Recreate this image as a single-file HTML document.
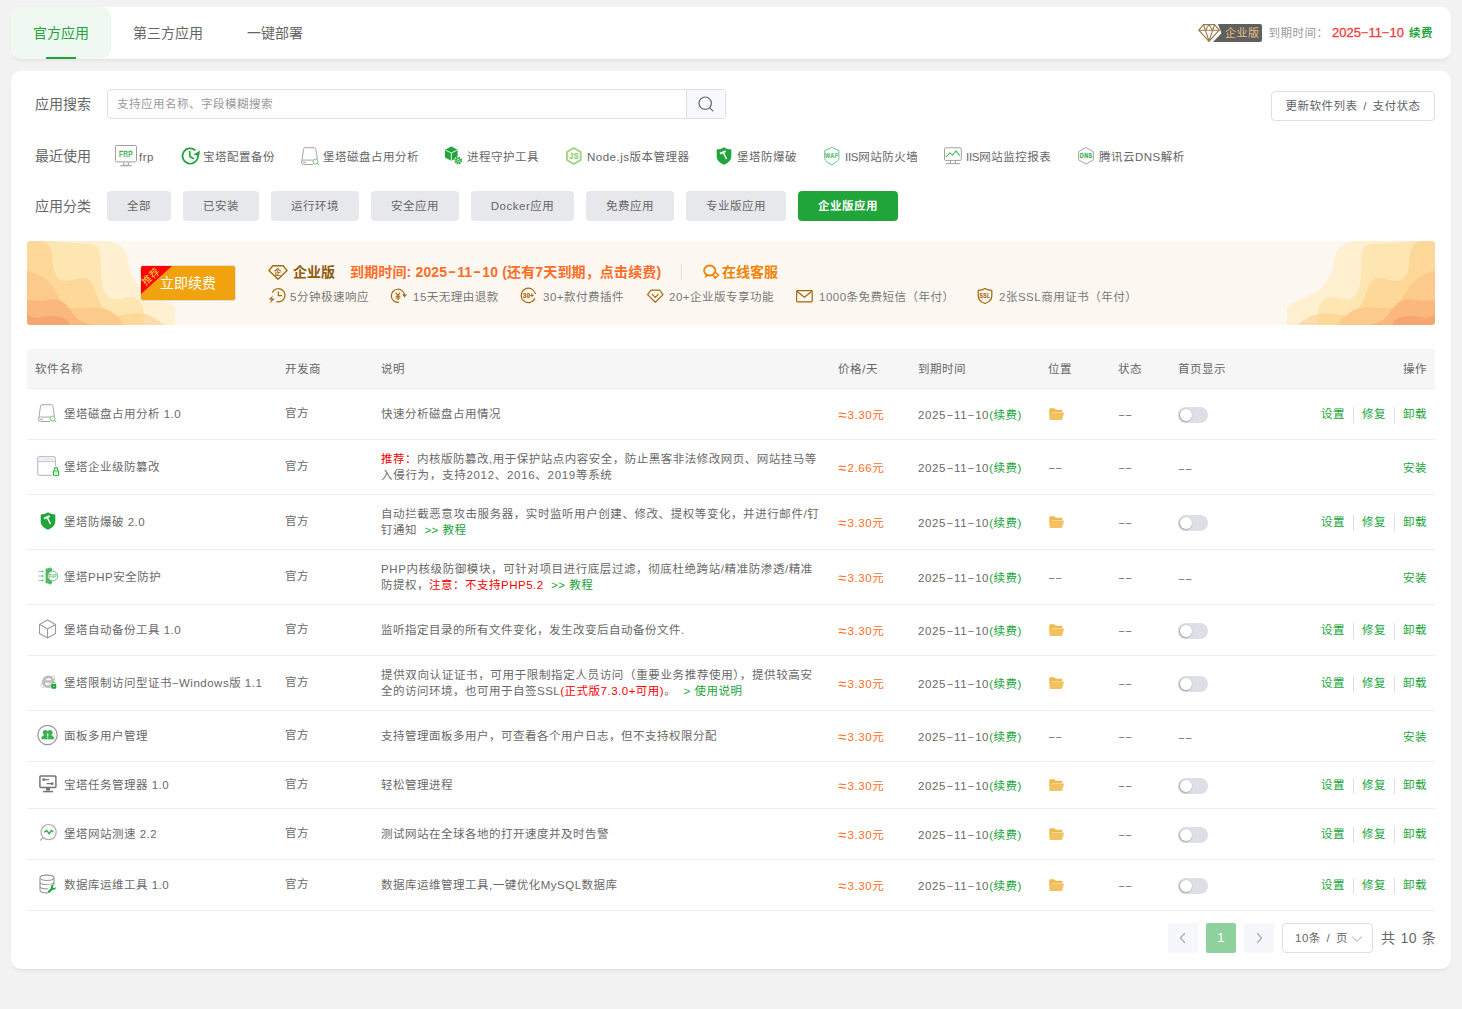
<!DOCTYPE html>
<html lang="zh-CN">
<head>
<meta charset="utf-8">
<title>软件商店</title>
<style>
*{box-sizing:border-box;margin:0;padding:0}
html,body{width:1462px;height:1009px;overflow:hidden;background:#f2f2f2}
body{font-family:"Liberation Sans","Noto Sans CJK SC",sans-serif;font-size:11.5px;letter-spacing:.5px;color:#696969;position:relative}
svg{display:block;overflow:visible}
.card{position:absolute;background:#fff;border-radius:10px;box-shadow:0 3px 4px -2px rgba(0,0,0,.085)}
#topcard{left:11px;top:7px;width:1440px;height:52px}
#maincard{left:11px;top:71px;width:1440px;height:898px}
.tab{letter-spacing:0;position:absolute;top:0;height:52px;line-height:52px;font-size:14px;color:#666;white-space:nowrap}
.tab.on{left:0;width:100px;background:#f0f9f1;border-radius:10px;color:#20a53a;text-align:center}
.tab.on:after{content:"";position:absolute;left:35px;bottom:0;width:30px;height:2px;background:#20a53a}
.lbl{letter-spacing:0;position:absolute;left:24px;font-size:14px;color:#666;line-height:20px;white-space:nowrap}
/* top right */
.vi{position:absolute}
.vbadge{position:absolute;left:1202px;top:17px;width:49px;height:18px;line-height:18px;background:#5f5f5f;color:#e6c083;font-size:11px;padding-left:12px;border-radius:0 2px 2px 0;white-space:nowrap;clip-path:polygon(5px 0,100% 0,100% 100%,0 100%,8.5px 52%)}
.vt{position:absolute;top:16px;height:20px;line-height:20px;white-space:nowrap}
.vdate{color:#ef3b3b;font-size:13px;letter-spacing:0;-webkit-text-stroke:.3px #ef3b3b}
/* search */
#search{position:absolute;left:96px;top:18px;width:619px;height:30px;border:1px solid #dcdfe6;border-radius:4px;background:#fff;overflow:hidden}
#search .ph{position:absolute;left:9px;top:0;line-height:28px;color:#999}
#search .btn{position:absolute;right:0;top:0;width:39px;height:28px;border-left:1px solid #dcdfe6;background:#f8f9fb}
#upd{word-spacing:2px;position:absolute;left:1260px;top:20px;width:164px;height:30px;border:1px solid #dcdfe6;border-radius:4px;line-height:28px;text-align:center;color:#606266;background:#fff;white-space:nowrap}
/* recent */
.rc{position:absolute;top:69px;height:32px;display:flex;align-items:center;white-space:nowrap;font-size:12px;color:#666}
.rc svg{margin-right:4px}
.ri{position:absolute}
.rt{position:absolute;top:76px;height:20px;line-height:20px;white-space:nowrap;color:#666}
/* categories */
.cat{position:absolute;top:120px;height:30px;line-height:30px;border-radius:4px;background:#e6e8eb;color:#666;text-align:center;white-space:nowrap}
.cat.on{background:#20a53a;color:#fff;font-weight:bold}
/* banner */
#banner{position:absolute;left:16px;top:170px;width:1408px;height:84px;background:#fdf7f1;border-radius:4px;overflow:hidden}
#banner .deco{position:absolute;top:0;width:148px;height:84px}
#renewbtn{letter-spacing:0;position:absolute;left:113px;top:24px;width:96px;height:36px;border:1px solid #e3dfd6;border-radius:3px;background:#f0a30f;overflow:hidden;color:#fff;font-size:14px;line-height:33px;white-space:nowrap}
#renewbtn .tri{position:absolute;left:0;top:0;width:0;height:0;border-top:28px solid #f00;border-right:31px solid transparent}
#renewbtn .rec{position:absolute;left:-4px;top:3.500px;width:28px;height:14px;line-height:14px;font-size:10px;color:#ffd54a;transform:rotate(-42deg);transform-origin:center;text-align:center}
#renewbtn .t{position:absolute;left:19px;top:1px}
.hy2{display:inline-block;width:10px;text-align:center;transform:translateY(-1px) scaleX(1.7)}
.b1{letter-spacing:0;position:absolute;top:21px;height:20px;line-height:20px;font-size:14px;font-weight:bold;white-space:nowrap}
.b2{position:absolute;top:46px;height:20px;line-height:20px;color:#777;white-space:nowrap}
.bi{position:absolute}
/* table */
#tbl{position:absolute;left:16px;top:278px;width:1408px}
.th{position:relative;height:40px;background:#f6f6f6;border-bottom:1px solid #ebeef5;color:#666}
.tr{position:relative;border-bottom:1px solid #ebeef5}
.c{position:absolute;top:0;bottom:0;display:flex;align-items:center;white-space:nowrap;line-height:16px}
.c.name{left:8px}
.c.name .ic{position:absolute;top:50%;transform:translateY(-50%)}
.c.name .nm{margin-left:29px}
.tr .c.dev{padding-bottom:2px}
.tr .c.price,.tr .c.exp,.tr .c.home{padding-top:2px}
.hy{display:inline-block;width:8px;text-align:center;letter-spacing:0;transform:translateY(-1px) scaleX(1.9);opacity:.85}
.dd .hy{width:7.3px;transform:scaleX(1.9);opacity:.9}
.ap{display:inline-block;width:9.5px;letter-spacing:0;transform:scale(1.3,1.3);transform-origin:0 60%}
.dt{letter-spacing:.6px}
.c.price{letter-spacing:.6px}
.tr .c.name .ic{top:calc(50% - 1px)}
.c.dev{left:258px}
.c.desc{left:354px;width:445px;white-space:normal;line-height:16px}
.c.price{left:811px;color:#fc6d26}
.c.exp{left:891px}
.c.pos{left:1021px}
.c.pos svg{margin-left:1px}
.c.st{left:1091px}
.c.home{left:1151px}
.c.op{right:8px;color:#20a53a}
.g{color:#20a53a}
.r{color:#f00}
.sep{display:inline-block;width:1px;height:16px;background:#dcdfe6;margin:0 8px;position:relative;top:1px}
.sw{width:30px;height:16px;border-radius:8px;background:#dcdfe6;position:relative}
.sw:after{content:"";position:absolute;left:2px;top:2px;width:12px;height:12px;border-radius:50%;background:#fff;box-shadow:-.5px .5px 1.5px .3px rgba(0,0,0,.3)}
/* pagination */
.pg{position:absolute;top:852px;height:30px;line-height:30px;text-align:center;border-radius:2px;background:#f5f7fa;color:#999;font-size:13px}
#psel{word-spacing:2px;position:absolute;left:1271px;top:852px;width:91px;height:30px;border:1px solid #dcdfe6;border-radius:4px;background:#fff;color:#666;line-height:28px;padding-left:12px;white-space:nowrap}
#ptot{position:absolute;left:1370px;top:852px;height:30px;line-height:30px;font-size:14px;color:#666;white-space:nowrap;letter-spacing:.5px;word-spacing:.5px}
</style>
</head>
<body>
<div class="card" id="topcard">
<div class="tab on">官方应用</div>
<div class="tab" style="left:122px">第三方应用</div>
<div class="tab" style="left:236px">一键部署</div>
<div class="vi" style="left:1187px;top:17px"><svg width="22" height="18" viewBox="0 0 22 18" style=""><path d="M5.400 0.700h11.200l4.600 5.500L11 17.300 0.800 6.200z" fill="none" stroke="#9a7b4f" stroke-width="1.200" stroke-linejoin="round"/><path d="M0.800 6.200h20.400M7.400 6.200L11 17 14.600 6.200M5.400 0.700l2 5.500 3.600-5.500 3.600 5.500 2-5.500" fill="none" stroke="#9a7b4f" stroke-width="1.100" stroke-linejoin="round"/></svg></div>
<div class="vbadge">企业版</div>
<div class="vt" style="left:1257.500px;color:#999">到期时间：</div>
<div class="vt vdate" style="left:1321px">2025<span class="hy" style="width:7.500px">-</span>11<span class="hy" style="width:7.500px">-</span>10</div>
<div class="vt" style="left:1398px;color:#20a53a;font-weight:bold">续费</div>
</div>
<div class="card" id="maincard">
<div class="lbl" style="top:23px">应用搜索</div>
<div id="search"><span class="ph">支持应用名称、字段模糊搜索</span><div class="btn">
<svg width="16" height="16" viewBox="0 0 16 16" style="position:absolute;left:11px;top:6px"><circle cx="7.200" cy="7.200" r="6.200" fill="none" stroke="#666" stroke-width="1.200"/><path d="M11.800 11.800l3 3" stroke="#666" stroke-width="1.200" stroke-linecap="round"/></svg>
</div></div>
<div id="upd">更新软件列表 / 支付状态</div>
<div class="lbl" style="top:75px">最近使用</div>
<div class="ri" style="left:104px;top:74px"><svg width="22" height="22" viewBox="0 0 22 22" style=""><rect x="0.5" y="0.5" width="21" height="16.4" rx="1.3" fill="#fff" stroke="#a0a0a0" stroke-width="1"/><path d="M9 17l-0.800 3.200h5.600L13 17M5 20.800h12" fill="none" stroke="#a0a0a0" stroke-width="1"/><text x="4" y="11.900" font-family="Liberation Sans, sans-serif" font-size="9.400" fill="#3bb153" stroke="#3bb153" stroke-width="0.400" textLength="14" lengthAdjust="spacingAndGlyphs">FRP</text></svg></div>
<div class="rt" style="left:128px">frp</div>
<div class="ri" style="left:170px;top:76px"><svg width="19" height="18" viewBox="0 0 19 18" style=""><path d="M16.900 8.300A7.700 7.700 0 1 1 14.400 3.300" fill="none" stroke="#20a53a" stroke-width="1.700"/><path d="M12.600 7.400L19 3.400l-0.900 5.900z" fill="#20a53a"/><path d="M8.800 4.600v4.900l3.500 2" fill="none" stroke="#20a53a" stroke-width="1.600" stroke-linecap="round" stroke-linejoin="round"/></svg></div>
<div class="rt" style="left:192px">宝塔配置备份</div>
<div class="ri" style="left:290px;top:76px"><svg width="19" height="18" viewBox="0 0 19 18" style=""><path d="M0.800 14.300L2.500 2.200a1.700 1.700 0 0 1 1.700-1.500h9a1.700 1.700 0 0 1 1.700 1.500l1.500 10" fill="none" stroke="#a6a6a6" stroke-width="1"/><path d="M12 13.100H2.500a1.900 1.900 0 0 0-1.900 1.900v0.600a1.900 1.900 0 0 0 1.900 1.900H12" fill="none" stroke="#a6a6a6" stroke-width="1"/><path d="M2.300 15.400h2.400" stroke="#a6a6a6" stroke-width="1" stroke-linecap="round"/><circle cx="14.500" cy="14.600" r="2.500" fill="#fff" stroke="#6cc47f" stroke-width="1"/><path d="M16.400 16.400l1.600 1.300" stroke="#6cc47f" stroke-width="1" stroke-linecap="round"/></svg></div>
<div class="rt" style="left:312px">堡塔磁盘占用分析</div>
<div class="ri" style="left:434px;top:75px"><svg width="18" height="19" viewBox="0 0 18 19" style=""><path d="M6.300 0.600l6.300 3.200v7.600l-6.300 3.400L0 11.400V3.800z" fill="#20a53a"/><path d="M0.300 4l6 3 6-3M6.300 7v7.600" fill="none" stroke="#fff" stroke-width="0.900"/><circle cx="13.200" cy="14.600" r="4.200" fill="#fff"/><circle cx="13.200" cy="14.600" r="2.600" fill="#20a53a"/><circle cx="13.200" cy="14.600" r="3.200" fill="none" stroke="#20a53a" stroke-width="1.500" stroke-dasharray="1.400 1.113"/><circle cx="13.200" cy="14.600" r="1.300" fill="none" stroke="#fff" stroke-width="0.700"/></svg></div>
<div class="rt" style="left:456px">进程守护工具</div>
<div class="ri" style="left:554px;top:75px"><svg width="17" height="19" viewBox="0 0 17 19" style=""><path d="M8.800 2l6.900 4v8l-6.900 4-6.900-4V6z" fill="#fff" stroke="#9dd47c" stroke-width="1.900" stroke-linejoin="round"/><text x="4.300" y="13.200" font-family="Liberation Sans, sans-serif" font-size="8.600" font-weight="bold" fill="#94cf72" stroke="#94cf72" stroke-width="0.300" textLength="9.800" lengthAdjust="spacingAndGlyphs">JS</text></svg></div>
<div class="rt" style="left:576px">Node.js版本管理器</div>
<div class="ri" style="left:705px;top:76px"><svg width="16" height="18" viewBox="0 0 16 18" style=""><path d="M8 0.300c2.200 1.500 4.600 2.200 7.300 2.300v6.300c0 4.200-3 7-7.300 8.800C3.700 15.900 0.700 13.100 0.700 8.900V2.600C3.400 2.500 5.800 1.800 8 0.300z" fill="#20a53a"/><path d="M4 6.700l5.600-2.600" fill="none" stroke="#fff" stroke-width="1.900"/><path d="M7.300 5.600l3 6" fill="none" stroke="#fff" stroke-width="1.400" stroke-linecap="round"/></svg></div>
<div class="rt" style="left:726px">堡塔防爆破</div>
<div class="ri" style="left:812px;top:75px"><svg width="17" height="19" viewBox="0 0 17 19" style=""><path d="M8.800 1.300l7.100 3.400v7.800c-0.600 2.400-3.300 4.600-7.100 6.200-3.800-1.600-6.500-3.800-7.100-6.200V4.700z" fill="#fff" stroke="#6cc47f" stroke-width="1" stroke-linejoin="round"/><text x="2" y="12" font-family="Liberation Sans, sans-serif" font-size="6.400" font-weight="bold" fill="#5cbd72" stroke="#5cbd72" stroke-width="0.200" textLength="13.400" lengthAdjust="spacingAndGlyphs">WAF</text></svg></div>
<div class="rt" style="left:834px"><span style="letter-spacing:-.3px">IIS</span>网站防火墙</div>
<div class="ri" style="left:933px;top:76px"><svg width="19" height="18" viewBox="0 0 19 18" style=""><rect x="0.500" y="0.800" width="16.800" height="12.600" rx="1" fill="#fff" stroke="#a0a0a0" stroke-width="1"/><path d="M6.500 13.600v2.600M11.300 13.600v2.600M2 16.600h14" fill="none" stroke="#a0a0a0" stroke-width="1"/><path d="M2.400 9.600l3.500-3.800 2.600 2.400 3.400-4.300 3.500 4.500" fill="none" stroke="#4cbb64" stroke-width="1.100" stroke-linejoin="round" stroke-linecap="round"/></svg></div>
<div class="rt" style="left:955px"><span style="letter-spacing:-.3px">IIS</span>网站监控报表</div>
<div class="ri" style="left:1066px;top:75px"><svg width="18" height="19" viewBox="0 0 18 19" style=""><path d="M9 1.500l7.400 4.200v8.200L9 18.100l-7.400-4.200V5.700z" fill="#fff" stroke="#a6a6a6" stroke-width="1" stroke-linejoin="round"/><text x="2.800" y="12.200" font-family="Liberation Sans, sans-serif" font-size="6.400" font-weight="bold" fill="#35ad4e" stroke="#35ad4e" stroke-width="0.200" textLength="12.800" lengthAdjust="spacingAndGlyphs">DNS</text></svg></div>
<div class="rt" style="left:1088px">腾讯云DNS解析</div>
<div class="lbl" style="top:125px">应用分类</div>
<div class="cat" style="left:96px;width:64px">全部</div>
<div class="cat" style="left:172px;width:76px">已安装</div>
<div class="cat" style="left:260px;width:88px">运行环境</div>
<div class="cat" style="left:360px;width:88px">安全应用</div>
<div class="cat" style="left:460px;width:103px">Docker应用</div>
<div class="cat" style="left:575px;width:88px">免费应用</div>
<div class="cat" style="left:675px;width:100px">专业版应用</div>
<div class="cat on" style="left:787px;width:100px">企业版应用</div>
<div id="banner">
<svg class="deco" style="left:0;transform:scaleX(-1)" width="148" height="84" viewBox="0 0 148 84"><path d="M0 84V66C8 60 16 57 23 54.500C31 51.500 38 45 43 35C47 27 46 19 49 12.300C52 5 60 0 69.400 0H148V84z" fill="#fef0d0"/><path d="M31 84V74C31 64 36 56.500 43.400 56C49 55.600 54 58.600 59.800 58.400C66 58.200 70.500 54 72.500 45C74.500 36 73.800 28 74.200 21C74.600 12 75 4.500 84 3C92 2 104 2.800 112 1.600C118 0.700 122 0 125.500 0H148V84z" fill="#fee6b2"/><path d="M10.600 84C18 78 26 73 36 72.300C44 71.800 52 74.500 58.400 74.500L50.900 84z" fill="#fddcab"/><path d="M31 84V73C34 72.400 38 72 42 72.600C48 73.600 53 74.600 58.400 74.500C66 72 72 68 75 62C79 54 80.500 47 83 42.300C85.500 37.500 90 36.200 95 37.300C101 38.600 106 40.400 111.800 39.600C117 38.600 121 33 122 24C122.800 16 122.500 10 125.500 5.400C128 1.800 132 0 136.400 0H148V84z" fill="#fdd899"/><path d="M50.900 84C53 79.500 56 76.500 59.500 74C63 71 67 68.600 70.800 67.700C76 66.300 82 66 88 66.400C94 66.800 100 67.600 106.300 67C110 66.300 112.500 64.500 114 61C116 56 120 48 125.500 42.300C132 35.500 140 31.500 148 29.600V84z" fill="#fccb8b"/><path d="M79 84C85 83.500 91 82 95.400 79.300C100 76.500 103 71 106.300 67C109 63.500 112 60.500 116 59C120 57.600 125 58.200 130 59.200C136 60.300 142 59.500 148 59V84z" fill="#fab87d"/><path d="M105 84C106 80.500 108.500 78 112 76.600C116 75 121 74.700 126 75C131 75.300 135 77.200 139 76.800C143 76.400 146.500 74.500 148 72.400V84z" fill="#f8a671"/></svg>
<svg class="deco" style="right:0" width="148" height="84" viewBox="0 0 148 84"><path d="M0 84V66C8 60 16 57 23 54.500C31 51.500 38 45 43 35C47 27 46 19 49 12.300C52 5 60 0 69.400 0H148V84z" fill="#fef0d0"/><path d="M31 84V74C31 64 36 56.500 43.400 56C49 55.600 54 58.600 59.800 58.400C66 58.200 70.500 54 72.500 45C74.500 36 73.800 28 74.200 21C74.600 12 75 4.500 84 3C92 2 104 2.800 112 1.600C118 0.700 122 0 125.500 0H148V84z" fill="#fee6b2"/><path d="M10.600 84C18 78 26 73 36 72.300C44 71.800 52 74.500 58.400 74.500L50.900 84z" fill="#fddcab"/><path d="M31 84V73C34 72.400 38 72 42 72.600C48 73.600 53 74.600 58.400 74.500C66 72 72 68 75 62C79 54 80.500 47 83 42.300C85.500 37.500 90 36.200 95 37.300C101 38.600 106 40.400 111.800 39.600C117 38.600 121 33 122 24C122.800 16 122.500 10 125.500 5.400C128 1.800 132 0 136.400 0H148V84z" fill="#fdd899"/><path d="M50.900 84C53 79.500 56 76.500 59.500 74C63 71 67 68.600 70.800 67.700C76 66.300 82 66 88 66.400C94 66.800 100 67.600 106.300 67C110 66.300 112.500 64.500 114 61C116 56 120 48 125.500 42.300C132 35.500 140 31.500 148 29.600V84z" fill="#fccb8b"/><path d="M79 84C85 83.500 91 82 95.400 79.300C100 76.500 103 71 106.300 67C109 63.500 112 60.500 116 59C120 57.600 125 58.200 130 59.200C136 60.300 142 59.500 148 59V84z" fill="#fab87d"/><path d="M105 84C106 80.500 108.500 78 112 76.600C116 75 121 74.700 126 75C131 75.300 135 77.200 139 76.800C143 76.400 146.500 74.500 148 72.400V84z" fill="#f8a671"/></svg>
<div id="renewbtn"><div class="tri"></div><div class="rec">推荐</div><span class="t">立即续费</span></div>
<div class="bi" style="left:241px;top:24px"><svg width="20" height="15" viewBox="0 0 20 15" style=""><path d="M4.800 0.800h10.400l3.900 4.800L10 14.200 0.900 5.600z" fill="none" stroke="#a4690a" stroke-width="1.400" stroke-linejoin="round"/><text x="10" y="9.600" font-family="Liberation Sans, Noto Sans CJK SC, sans-serif" font-size="7.500" font-weight="bold" fill="#a4690a" text-anchor="middle">企</text></svg></div>
<div class="b1" style="left:266px;color:#8d5b0b">企业版</div>
<div class="b1" style="left:323px;color:#fc6d26;letter-spacing:.15px">到期时间: 2025<span class="hy2">-</span>11<span class="hy2">-</span>10 (还有7天到期，点击续费)</div>
<div class="bi" style="left:654px;top:23px;width:1px;height:16px;background:#dcdfe6"></div>
<div class="bi" style="left:676px;top:23px"><svg width="17" height="16" viewBox="0 0 17 16" style=""><path d="M2.200 10.200l0.200 3.800 3.300-2.400z" fill="#f08408"/><ellipse cx="6.700" cy="6.500" rx="5.600" ry="5" fill="#fdf7f1" stroke="#f08408" stroke-width="1.800"/><path d="M10.900 12.600l1 3 2-2.400z" fill="#f08408"/><path d="M12.400 8.400l3.300 2.600-3.300 2.600-2.800-2.600z" fill="#fdf7f1" stroke="#f08408" stroke-width="1.500" stroke-linejoin="round"/></svg></div>
<div class="b1" style="left:695px;color:#f08408">在线客服</div>
<div class="bi" style="left:241px;top:46px"><svg width="17" height="17" viewBox="0 0 17 17" style=""><path d="M4.500 5.200a6.600 6.600 0 1 1 4.300 9.400" fill="none" stroke="#a4690a" stroke-width="1.200" stroke-linecap="round"/><path d="M10.300 4.800v3.800h3.200" fill="none" stroke="#a4690a" stroke-width="1.200" stroke-linecap="round"/><path d="M5.200 8.200L0.600 12.600h3l-1.800 4 5-5H3.600z" fill="#a4690a"/></svg></div>
<div class="b2" style="left:263px">5分钟极速响应</div>
<div class="bi" style="left:363px;top:46px"><svg width="17" height="17" viewBox="0 0 17 17" style=""><path d="M8.400 15.400A6.600 6.600 0 1 1 14.500 8.400" fill="none" stroke="#a4690a" stroke-width="1.200" stroke-linecap="round"/><path d="M12.200 7.600h4.800l-2.400 3z" fill="#a4690a"/><path d="M5.800 5.600l2.200 3 2.200-3M5.600 9.200h4.800M5.600 11h4.800M8 8.600v4.600" fill="none" stroke="#a4690a" stroke-width="1.100"/></svg></div>
<div class="b2" style="left:386px">15天无理由退款</div>
<div class="bi" style="left:493px;top:46px"><svg width="17" height="17" viewBox="0 0 17 17" style=""><path d="M14.800 11.800a7.200 7.200 0 1 1 0.600-5.200" fill="none" stroke="#a4690a" stroke-width="1.200" stroke-linecap="round"/><text x="3" y="11.400" font-family="Liberation Sans, sans-serif" font-size="6.800" font-weight="bold" fill="#a4690a" stroke="#a4690a" stroke-width="0.250" textLength="11.200" lengthAdjust="spacingAndGlyphs">30+</text></svg></div>
<div class="b2" style="left:516px">30+款付费插件</div>
<div class="bi" style="left:620px;top:46px"><svg width="17" height="17" viewBox="0 0 17 17" style=""><path d="M4 3.200h8.600l3.400 4.400L8.300 15.200 0.600 7.600z" fill="none" stroke="#a4690a" stroke-width="1.200" stroke-linejoin="round"/><path d="M5.300 7.400l3 3 3-3" fill="none" stroke="#a4690a" stroke-width="1.200" stroke-linecap="round" stroke-linejoin="round"/></svg></div>
<div class="b2" style="left:642px">20+企业版专享功能</div>
<div class="bi" style="left:769px;top:46px"><svg width="17" height="17" viewBox="0 0 17 17" style=""><rect x="0.600" y="3.600" width="15.600" height="11.200" rx="0.800" fill="none" stroke="#a4690a" stroke-width="1.200"/><path d="M1 4.200l7.400 6 7.400-6" fill="none" stroke="#a4690a" stroke-width="1.200" stroke-linejoin="round"/></svg></div>
<div class="b2" style="left:792px">1000条免费短信（年付）</div>
<div class="bi" style="left:950px;top:46px"><svg width="17" height="17" viewBox="0 0 17 17" style=""><path d="M8 1.500c2 1.200 4.200 1.800 6.800 1.900v5.500c0 3.600-2.700 6-6.800 7.600-4.100-1.600-6.800-4-6.800-7.600V3.400c2.600-0.100 4.800-0.700 6.800-1.900z" fill="none" stroke="#a4690a" stroke-width="1.200" stroke-linejoin="round"/><text x="2.600" y="11.300" font-family="Liberation Sans, sans-serif" font-size="6.600" font-weight="bold" fill="#a4690a" stroke="#a4690a" stroke-width="0.200" textLength="10.800" lengthAdjust="spacingAndGlyphs">SSL</text></svg></div>
<div class="b2" style="left:972px">2张SSL商用证书（年付）</div>
</div>
<div id="tbl">
<div class="th"><div class="c name"><div>软件名称</div></div><div class="c dev"><div>开发商</div></div><div class="c desc"><div>说明</div></div><div class="c price" style="color:inherit"><div>价格/天</div></div><div class="c exp"><div>到期时间</div></div><div class="c pos"><div>位置</div></div><div class="c st"><div>状态</div></div><div class="c home"><div>首页显示</div></div><div class="c op" style="color:inherit"><div>操作</div></div></div>
<div class="tr" style="height:51px">
<div class="c name"><span class="ic" style="left:3px"><svg width="19" height="18" viewBox="0 0 19 18" style=""><path d="M0.800 14.300L2.500 2.200a1.700 1.700 0 0 1 1.700-1.500h9a1.700 1.700 0 0 1 1.700 1.500l1.500 10" fill="none" stroke="#a6a6a6" stroke-width="1"/><path d="M12 13.100H2.500a1.900 1.900 0 0 0-1.900 1.900v0.600a1.900 1.900 0 0 0 1.900 1.900H12" fill="none" stroke="#a6a6a6" stroke-width="1"/><path d="M2.300 15.400h2.400" stroke="#a6a6a6" stroke-width="1" stroke-linecap="round"/><circle cx="14.500" cy="14.600" r="2.500" fill="#fff" stroke="#6cc47f" stroke-width="1"/><path d="M16.400 16.400l1.600 1.300" stroke="#6cc47f" stroke-width="1" stroke-linecap="round"/></svg></span><span class="nm">堡塔磁盘占用分析 1.0</span></div>
<div class="c dev"><div>官方</div></div>
<div class="c desc"><div>快速分析磁盘占用情况</div></div>
<div class="c price"><div><span class="ap">≈</span>3.30元</div></div>
<div class="c exp"><div><span class="dt">2025<span class="hy">-</span>11<span class="hy">-</span>10</span><span class="g">(续费)</span></div></div>
<div class="c pos"><svg width="15" height="12" viewBox="0 0 15 12" style=""><path d="M0.300 1.300a1 1 0 0 1 1-1h4l1.400 1.500h5.600a1 1 0 0 1 1 1v1.400H3.300L0.300 10.500z" fill="#f0b94d"/><path d="M3.400 4.600h10.800a0.700 0.700 0 0 1 0.700 0.900l-1.800 5.700a1 1 0 0 1-1 0.700H1.200a0.700 0.700 0 0 1-0.700-0.900l1.900-5.700a1 1 0 0 1 1-0.700z" fill="#f3c260"/></svg></div>
<div class="c st"><span class="dd"><span class="hy">-</span><span class="hy">-</span></span></div>
<div class="c home"><div class="sw"></div></div>
<div class="c op"><span>设置</span><i class="sep"></i><span>修复</span><i class="sep"></i><span>卸载</span></div>
</div>
<div class="tr" style="height:55px">
<div class="c name"><span class="ic" style="left:2px"><svg width="22" height="20" viewBox="0 0 22 20" style=""><rect x="0.700" y="0.700" width="17.700" height="18.700" rx="2" fill="#fff" stroke="#c0c0cf" stroke-width="1.200"/><path d="M0.800 5.400h17.500" stroke="#c0c0cf" stroke-width="1.100"/><path d="M2 3.100h14.600" stroke="#d9d9e3" stroke-width="1.300" stroke-dasharray="0.900 0.500 0.900 0.500 0.900 0.500 0.900 0.700 9 0"/><rect x="14.600" y="10.300" width="8" height="10.500" fill="#fff"/><path d="M17.300 14.800v-1.400a1.700 1.700 0 0 1 3.400 0v1.400" fill="none" stroke="#2cba3d" stroke-width="1.200"/><rect x="16.400" y="15" width="5.200" height="4.500" rx="0.500" fill="#fff" stroke="#2cba3d" stroke-width="1.200"/><rect x="18.600" y="16.300" width="0.800" height="1.900" fill="#2cba3d"/></svg></span><span class="nm">堡塔企业级防篡改</span></div>
<div class="c dev"><div>官方</div></div>
<div class="c desc"><div><span class="r">推荐：</span>内核版防篡改,用于保护站点内容安全，防止黑客非法修改网页、网站挂马等<br><span style="letter-spacing:.7px">入侵行为，支持2012、2016、2019等系统</span></div></div>
<div class="c price"><div><span class="ap">≈</span>2.66元</div></div>
<div class="c exp"><div><span class="dt">2025<span class="hy">-</span>11<span class="hy">-</span>10</span><span class="g">(续费)</span></div></div>
<div class="c pos"><span class="dd"><span class="hy">-</span><span class="hy">-</span></span></div>
<div class="c st"><span class="dd"><span class="hy">-</span><span class="hy">-</span></span></div>
<div class="c home"><span class="dd"><span class="hy">-</span><span class="hy">-</span></span></div>
<div class="c op" style="padding-top:2px"><span>安装</span></div>
</div>
<div class="tr" style="height:55px">
<div class="c name"><span class="ic" style="left:5px"><svg width="16" height="18" viewBox="0 0 16 18" style=""><path d="M8 0.300c2.200 1.500 4.600 2.200 7.300 2.300v6.300c0 4.200-3 7-7.300 8.800C3.700 15.900 0.700 13.100 0.700 8.900V2.600C3.400 2.500 5.800 1.800 8 0.300z" fill="#20a53a"/><path d="M4 6.700l5.600-2.600" fill="none" stroke="#fff" stroke-width="1.900"/><path d="M7.300 5.600l3 6" fill="none" stroke="#fff" stroke-width="1.400" stroke-linecap="round"/></svg></span><span class="nm">堡塔防爆破 2.0</span></div>
<div class="c dev"><div>官方</div></div>
<div class="c desc"><div><span style="letter-spacing:.57px">自动拦截恶意攻击服务器，实时监听用户创建、修改、提权等变化，并进行邮件/钉</span><br>钉通知 <span class="g">&nbsp;&gt;&gt; 教程</span></div></div>
<div class="c price"><div><span class="ap">≈</span>3.30元</div></div>
<div class="c exp"><div><span class="dt">2025<span class="hy">-</span>11<span class="hy">-</span>10</span><span class="g">(续费)</span></div></div>
<div class="c pos"><svg width="15" height="12" viewBox="0 0 15 12" style=""><path d="M0.300 1.300a1 1 0 0 1 1-1h4l1.400 1.500h5.600a1 1 0 0 1 1 1v1.400H3.300L0.300 10.500z" fill="#f0b94d"/><path d="M3.400 4.600h10.800a0.700 0.700 0 0 1 0.700 0.900l-1.800 5.700a1 1 0 0 1-1 0.700H1.200a0.700 0.700 0 0 1-0.700-0.900l1.900-5.700a1 1 0 0 1 1-0.700z" fill="#f3c260"/></svg></div>
<div class="c st"><span class="dd"><span class="hy">-</span><span class="hy">-</span></span></div>
<div class="c home"><div class="sw"></div></div>
<div class="c op"><span>设置</span><i class="sep"></i><span>修复</span><i class="sep"></i><span>卸载</span></div>
</div>
<div class="tr" style="height:55px">
<div class="c name"><span class="ic" style="left:3px"><svg width="20" height="18" viewBox="0 0 20 18" style=""><path d="M0.500 4.500h4M0.500 9h4M0.500 13.500h4" stroke="#8ed39b" stroke-width="1" fill="none"/><path d="M3.800 3l2.200 1.500-2.200 1.500zM3.800 7.500l2.200 1.500-2.200 1.500zM3.800 12l2.200 1.500-2.200 1.500z" fill="#6cc47f"/><path d="M7.600 1.600c2.200 0 3.800-0.700 5-1.400l1.500 2v13.600l-1.500 2c-1.200-0.800-2.800-1.600-5-1.800z" fill="#4cba63"/><circle cx="14.800" cy="9" r="4.900" fill="#fff" stroke="#6cc47f" stroke-width="1"/><text x="10.900" y="10.700" font-family="Liberation Sans, sans-serif" font-size="4.800" font-weight="bold" fill="#4cba63" textLength="7.800" lengthAdjust="spacingAndGlyphs">PHP</text></svg></span><span class="nm">堡塔PHP安全防护</span></div>
<div class="c dev"><div>官方</div></div>
<div class="c desc"><div><span style="letter-spacing:.59px">PHP内核级防御模块，可针对项目进行底层过滤，彻底杜绝跨站/精准防渗透/精准</span><br>防提权，<span class="r">注意：不支持PHP5.2</span> <span class="g">&nbsp;&gt;&gt; 教程</span></div></div>
<div class="c price"><div><span class="ap">≈</span>3.30元</div></div>
<div class="c exp"><div><span class="dt">2025<span class="hy">-</span>11<span class="hy">-</span>10</span><span class="g">(续费)</span></div></div>
<div class="c pos"><span class="dd"><span class="hy">-</span><span class="hy">-</span></span></div>
<div class="c st"><span class="dd"><span class="hy">-</span><span class="hy">-</span></span></div>
<div class="c home"><span class="dd"><span class="hy">-</span><span class="hy">-</span></span></div>
<div class="c op" style="padding-top:2px"><span>安装</span></div>
</div>
<div class="tr" style="height:51px">
<div class="c name"><span class="ic" style="left:3px"><svg width="19" height="20" viewBox="0 0 19 20" style=""><path d="M9.500 1l8 4.400v9.200l-8 4.400-8-4.400V5.400z" fill="#fff" stroke="#9a9a9a" stroke-width="1.100" stroke-linejoin="round"/><path d="M1.700 5.600l7.800 4.300 7.800-4.300M9.500 9.900v8.900" fill="none" stroke="#9a9a9a" stroke-width="1.100" stroke-linejoin="round"/></svg></span><span class="nm">堡塔自动备份工具 1.0</span></div>
<div class="c dev"><div>官方</div></div>
<div class="c desc"><div>监听指定目录的所有文件变化，发生改变后自动备份文件.</div></div>
<div class="c price"><div><span class="ap">≈</span>3.30元</div></div>
<div class="c exp"><div><span class="dt">2025<span class="hy">-</span>11<span class="hy">-</span>10</span><span class="g">(续费)</span></div></div>
<div class="c pos"><svg width="15" height="12" viewBox="0 0 15 12" style=""><path d="M0.300 1.300a1 1 0 0 1 1-1h4l1.400 1.500h5.600a1 1 0 0 1 1 1v1.400H3.300L0.300 10.500z" fill="#f0b94d"/><path d="M3.400 4.600h10.800a0.700 0.700 0 0 1 0.700 0.900l-1.800 5.700a1 1 0 0 1-1 0.700H1.200a0.700 0.700 0 0 1-0.700-0.900l1.900-5.700a1 1 0 0 1 1-0.700z" fill="#f3c260"/></svg></div>
<div class="c st"><span class="dd"><span class="hy">-</span><span class="hy">-</span></span></div>
<div class="c home"><div class="sw"></div></div>
<div class="c op"><span>设置</span><i class="sep"></i><span>修复</span><i class="sep"></i><span>卸载</span></div>
</div>
<div class="tr" style="height:55px">
<div class="c name"><span class="ic" style="left:4px"><svg width="19" height="18" viewBox="0 0 19 18" style=""><ellipse cx="8.800" cy="8.700" rx="8.300" ry="3.300" transform="rotate(-36 8.800 8.700)" fill="none" stroke="#d4d4d4" stroke-width="1"/><path d="M13.700 10.900a5 5 0 1 1 0.500-2.300H5.500" fill="none" stroke="#bdbdbd" stroke-width="2.500"/><path d="M13.500 11.200v-0.700a1.300 1.300 0 0 1 2.600 0v0.700" fill="none" stroke="#5cc470" stroke-width="1"/><rect x="12.300" y="10.900" width="5" height="4.800" rx="1" fill="#20a53a"/><rect x="14" y="12.900" width="1.600" height="0.800" fill="#bfe6c6"/></svg></span><span class="nm">堡塔限制访问型证书<span class="hy" style="width:7px">-</span>Windows版 1.1</span></div>
<div class="c dev"><div>官方</div></div>
<div class="c desc"><div><span style="letter-spacing:.65px">提供双向认证证书，可用于限制指定人员访问（重要业务推荐使用），提供较高安</span><br>全的访问环境，也可用于自签SSL<span class="r">(正式版7.3.0+可用)</span>。 <span class="g">&nbsp;&gt; 使用说明</span></div></div>
<div class="c price"><div><span class="ap">≈</span>3.30元</div></div>
<div class="c exp"><div><span class="dt">2025<span class="hy">-</span>11<span class="hy">-</span>10</span><span class="g">(续费)</span></div></div>
<div class="c pos"><svg width="15" height="12" viewBox="0 0 15 12" style=""><path d="M0.300 1.300a1 1 0 0 1 1-1h4l1.400 1.500h5.600a1 1 0 0 1 1 1v1.400H3.300L0.300 10.500z" fill="#f0b94d"/><path d="M3.400 4.600h10.800a0.700 0.700 0 0 1 0.700 0.900l-1.800 5.700a1 1 0 0 1-1 0.700H1.200a0.700 0.700 0 0 1-0.700-0.900l1.900-5.700a1 1 0 0 1 1-0.700z" fill="#f3c260"/></svg></div>
<div class="c st"><span class="dd"><span class="hy">-</span><span class="hy">-</span></span></div>
<div class="c home"><div class="sw"></div></div>
<div class="c op"><span>设置</span><i class="sep"></i><span>修复</span><i class="sep"></i><span>卸载</span></div>
</div>
<div class="tr" style="height:51px">
<div class="c name"><span class="ic" style="left:2px"><svg width="21" height="21" viewBox="0 0 21 21" style=""><circle cx="10.500" cy="10.500" r="9.700" fill="#fff" stroke="#999" stroke-width="1.200"/><circle cx="8.400" cy="8" r="2.600" fill="#3bb153"/><circle cx="13" cy="8" r="2.600" fill="#3bb153"/><path d="M4.200 14.800c0-2.700 1.800-4.200 4.200-4.200s4.200 1.500 4.200 4.200z" fill="#3bb153"/><path d="M8.800 14.800c0-2.700 1.800-4.200 4.200-4.200s4.200 1.500 4.200 4.200z" fill="#3bb153"/><path d="M10.700 8.500v6.300" stroke="#fff" stroke-width="0.600"/></svg></span><span class="nm">面板多用户管理</span></div>
<div class="c dev"><div>官方</div></div>
<div class="c desc"><div>支持管理面板多用户，可查看各个用户日志，但不支持权限分配</div></div>
<div class="c price"><div><span class="ap">≈</span>3.30元</div></div>
<div class="c exp"><div><span class="dt">2025<span class="hy">-</span>11<span class="hy">-</span>10</span><span class="g">(续费)</span></div></div>
<div class="c pos"><span class="dd"><span class="hy">-</span><span class="hy">-</span></span></div>
<div class="c st"><span class="dd"><span class="hy">-</span><span class="hy">-</span></span></div>
<div class="c home"><span class="dd"><span class="hy">-</span><span class="hy">-</span></span></div>
<div class="c op" style="padding-top:2px"><span>安装</span></div>
</div>
<div class="tr" style="height:47px">
<div class="c name"><span class="ic" style="left:3px"><svg width="19" height="18" viewBox="0 0 19 18" style=""><rect x="1.900" y="1" width="16" height="11.600" rx="1" fill="#fff" stroke="#757575" stroke-width="1.500"/><path d="M5 4.600h6M8.500 8.600h6.500" stroke="#757575" stroke-width="1.300"/><rect x="4.400" y="3.400" width="2.400" height="2.400" fill="#757575"/><rect x="13" y="7.400" width="2.400" height="2.400" fill="#757575"/><path d="M8 13v2.600h4V13" fill="#757575"/><path d="M5 16.600h10" stroke="#757575" stroke-width="1.500"/></svg></span><span class="nm">宝塔任务管理器 1.0</span></div>
<div class="c dev"><div>官方</div></div>
<div class="c desc"><div>轻松管理进程</div></div>
<div class="c price"><div><span class="ap">≈</span>3.30元</div></div>
<div class="c exp"><div><span class="dt">2025<span class="hy">-</span>11<span class="hy">-</span>10</span><span class="g">(续费)</span></div></div>
<div class="c pos"><svg width="15" height="12" viewBox="0 0 15 12" style=""><path d="M0.300 1.300a1 1 0 0 1 1-1h4l1.400 1.500h5.600a1 1 0 0 1 1 1v1.400H3.300L0.300 10.500z" fill="#f0b94d"/><path d="M3.400 4.600h10.800a0.700 0.700 0 0 1 0.700 0.900l-1.800 5.700a1 1 0 0 1-1 0.700H1.200a0.700 0.700 0 0 1-0.700-0.900l1.900-5.700a1 1 0 0 1 1-0.700z" fill="#f3c260"/></svg></div>
<div class="c st"><span class="dd"><span class="hy">-</span><span class="hy">-</span></span></div>
<div class="c home"><div class="sw"></div></div>
<div class="c op"><span>设置</span><i class="sep"></i><span>修复</span><i class="sep"></i><span>卸载</span></div>
</div>
<div class="tr" style="height:51px">
<div class="c name"><span class="ic" style="left:3px"><svg width="19" height="19" viewBox="0 0 19 19" style=""><circle cx="10.600" cy="8.600" r="7.600" fill="#fff" stroke="#adadad" stroke-width="1.200"/><path d="M4.800 14.200L2.600 16.600" stroke="#adadad" stroke-width="1.400" stroke-linecap="round"/><path d="M6.600 8.400l2.200-1.400 2.400 3.400 2.200-3.600 1.400 1.400" fill="none" stroke="#3bb153" stroke-width="1.500" stroke-linejoin="round" stroke-linecap="round"/></svg></span><span class="nm">堡塔网站测速 2.2</span></div>
<div class="c dev"><div>官方</div></div>
<div class="c desc"><div>测试网站在全球各地的打开速度并及时告警</div></div>
<div class="c price"><div><span class="ap">≈</span>3.30元</div></div>
<div class="c exp"><div><span class="dt">2025<span class="hy">-</span>11<span class="hy">-</span>10</span><span class="g">(续费)</span></div></div>
<div class="c pos"><svg width="15" height="12" viewBox="0 0 15 12" style=""><path d="M0.300 1.300a1 1 0 0 1 1-1h4l1.400 1.500h5.600a1 1 0 0 1 1 1v1.400H3.300L0.300 10.500z" fill="#f0b94d"/><path d="M3.400 4.600h10.800a0.700 0.700 0 0 1 0.700 0.900l-1.800 5.700a1 1 0 0 1-1 0.700H1.200a0.700 0.700 0 0 1-0.700-0.900l1.900-5.700a1 1 0 0 1 1-0.700z" fill="#f3c260"/></svg></div>
<div class="c st"><span class="dd"><span class="hy">-</span><span class="hy">-</span></span></div>
<div class="c home"><div class="sw"></div></div>
<div class="c op"><span>设置</span><i class="sep"></i><span>修复</span><i class="sep"></i><span>卸载</span></div>
</div>
<div class="tr" style="height:51px">
<div class="c name"><span class="ic" style="left:3px"><svg width="20" height="20" viewBox="0 0 20 20" style=""><path d="M2 3.800v12.400c0 1.500 3.100 2.700 7 2.700s7-1.200 7-2.700V3.800" fill="#fff" stroke="#999" stroke-width="1.100"/><ellipse cx="9" cy="3.800" rx="7" ry="2.700" fill="#fff" stroke="#999" stroke-width="1.100"/><path d="M2 8c0 1.500 3.100 2.700 7 2.700s7-1.200 7-2.700M2 12.200c0 1.500 3.100 2.700 7 2.700s7-1.200 7-2.700" fill="none" stroke="#999" stroke-width="1.100"/><rect x="9.800" y="10.600" width="8.500" height="9.400" fill="#fff"/><path d="M18.200 13a2.900 2.900 0 0 1-3.700 2.700l-2.700 2.800a1.150 1.150 0 0 1-1.700-1.600l2.900-2.700a2.900 2.900 0 0 1 3.400-3.700l-1.600 1.700 0.400 1.500 1.500 0.400z" fill="#20a53a"/></svg></span><span class="nm">数据库运维工具 1.0</span></div>
<div class="c dev"><div>官方</div></div>
<div class="c desc"><div>数据库运维管理工具,一键优化MySQL数据库</div></div>
<div class="c price"><div><span class="ap">≈</span>3.30元</div></div>
<div class="c exp"><div><span class="dt">2025<span class="hy">-</span>11<span class="hy">-</span>10</span><span class="g">(续费)</span></div></div>
<div class="c pos"><svg width="15" height="12" viewBox="0 0 15 12" style=""><path d="M0.300 1.300a1 1 0 0 1 1-1h4l1.400 1.500h5.600a1 1 0 0 1 1 1v1.400H3.300L0.300 10.500z" fill="#f0b94d"/><path d="M3.400 4.600h10.800a0.700 0.700 0 0 1 0.700 0.900l-1.800 5.700a1 1 0 0 1-1 0.700H1.200a0.700 0.700 0 0 1-0.700-0.900l1.900-5.700a1 1 0 0 1 1-0.700z" fill="#f3c260"/></svg></div>
<div class="c st"><span class="dd"><span class="hy">-</span><span class="hy">-</span></span></div>
<div class="c home"><div class="sw"></div></div>
<div class="c op"><span>设置</span><i class="sep"></i><span>修复</span><i class="sep"></i><span>卸载</span></div>
</div>
</div>
<div class="pg" style="left:1157px;width:30px"><svg width="30" height="30" viewBox="0 0 30 30" style=""><path d="M16.500 10.500l-4 4.500 4 4.500" fill="none" stroke="#a8abb2" stroke-width="1.200" stroke-linecap="round" stroke-linejoin="round"/></svg></div>
<div class="pg" style="left:1195px;width:30px;background:#8fd19c;color:#fff">1</div>
<div class="pg" style="left:1233px;width:30px"><svg width="30" height="30" viewBox="0 0 30 30" style=""><path d="M13.500 10.500l4 4.500-4 4.500" fill="none" stroke="#a8abb2" stroke-width="1.200" stroke-linecap="round" stroke-linejoin="round"/></svg></div>
<div id="psel">10条 / 页<svg width="12" height="12" viewBox="0 0 12 12" style="position:absolute;right:9px;top:9px"><path d="M1.500 3.800l4.500 4.500 4.500-4.500" fill="none" stroke="#c0c4cc" stroke-width="1.100" stroke-linecap="round" stroke-linejoin="round"/></svg></div>
<div id="ptot">共 10 条</div>
</div>
</body>
</html>
